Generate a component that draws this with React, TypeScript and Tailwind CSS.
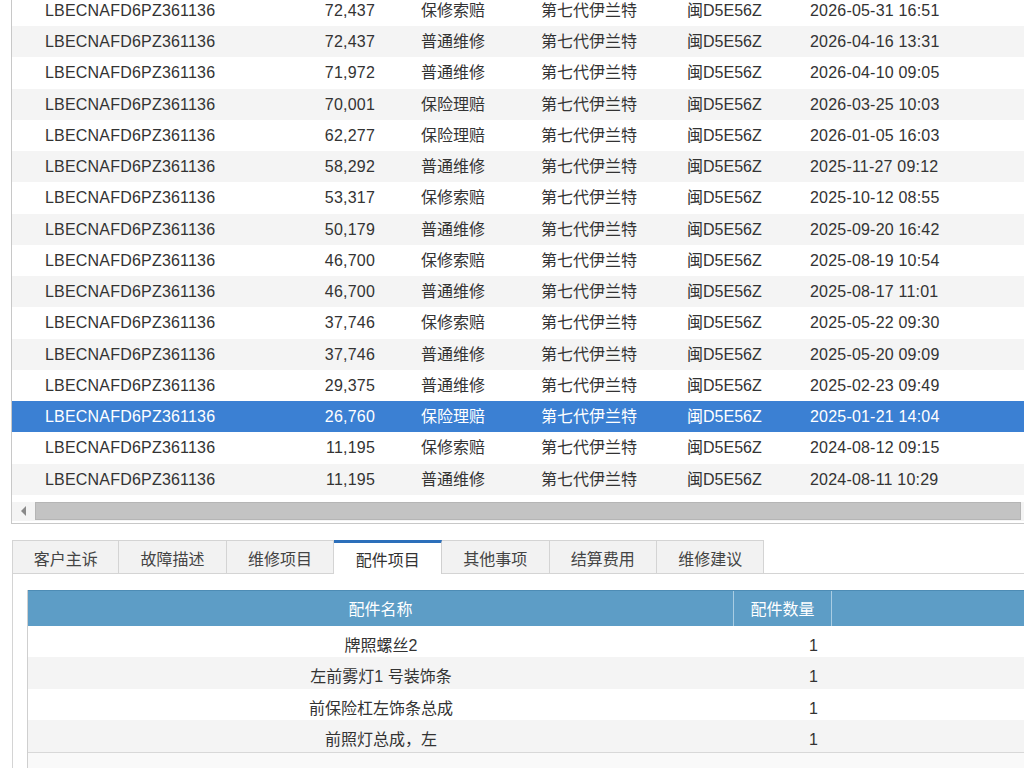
import React from "react";

type Record = {
  vin: string;
  mileage: string;
  kind: string;
  model: string;
  plate: string;
  time: string;
};

const VIN = "LBECNAFD6PZ361136";

const records: Record[] = [
  ["72,437", "保修索赔", "2026-05-31 16:51"],
  ["72,437", "普通维修", "2026-04-16 13:31"],
  ["71,972", "普通维修", "2026-04-10 09:05"],
  ["70,001", "保险理赔", "2026-03-25 10:03"],
  ["62,277", "保险理赔", "2026-01-05 16:03"],
  ["58,292", "普通维修", "2025-11-27 09:12"],
  ["53,317", "保修索赔", "2025-10-12 08:55"],
  ["50,179", "普通维修", "2025-09-20 16:42"],
  ["46,700", "保修索赔", "2025-08-19 10:54"],
  ["46,700", "普通维修", "2025-08-17 11:01"],
  ["37,746", "保修索赔", "2025-05-22 09:30"],
  ["37,746", "普通维修", "2025-05-20 09:09"],
  ["29,375", "普通维修", "2025-02-23 09:49"],
  ["26,760", "保险理赔", "2025-01-21 14:04"],
  ["11,195", "保修索赔", "2024-08-12 09:15"],
  ["11,195", "普通维修", "2024-08-11 10:29"],
].map(([mileage, kind, time]) => ({
  vin: VIN,
  mileage,
  kind,
  model: "第七代伊兰特",
  plate: "闽D5E56Z",
  time,
}));

const SELECTED = 13;

const tabs = ["客户主诉", "故障描述", "维修项目", "配件项目", "其他事项", "结算费用", "维修建议"];
const ACTIVE_TAB = 3;

const parts = [
  { name: "牌照螺丝2", qty: 1 },
  { name: "左前雾灯1 号装饰条", qty: 1 },
  { name: "前保险杠左饰条总成", qty: 1 },
  { name: "前照灯总成，左", qty: 1 },
];

function RecordRow({ r, index }: { r: Record; index: number }) {
  const selected = index === SELECTED;
  const bg = selected ? "bg-[#3b80d3] text-white" : index % 2 === 1 ? "bg-[#f4f4f4]" : "bg-white";
  return (
    <div className={`flex h-[31.25px] items-center pt-[1px] whitespace-nowrap ${bg}`}>
      <div className="w-[288px] pl-[33px] tracking-[0.2px]">{r.vin}</div>
      <div className="w-[75px] text-right tracking-[0.2px]">{r.mileage}</div>
      <div className="w-[166px] pl-[46px]">{r.kind}</div>
      <div className="w-[146px]">{r.model}</div>
      <div className="w-[123px]">{r.plate}</div>
      <div className="flex-1 tracking-[0.2px]">{r.time}</div>
    </div>
  );
}

export default function App() {
  return (
    <div
      className="w-[1024px] h-[768px] overflow-hidden bg-white text-[16px] leading-none text-[#333]"
      style={{ fontFamily: '"Liberation Sans", "Noto Sans CJK SC", sans-serif' }}
    >
      {/* Repair history grid, scrolled down */}
      <div className="ml-[11px] mt-[-5.25px] border-l border-b border-[#c8c8c8]">
        {records.map((r, i) => (
          <RecordRow key={i} r={r} index={i} />
        ))}
        <div className="h-[7px]" />
        {/* Horizontal scrollbar */}
        <div className="flex h-[19px] items-center bg-[#f4f4f4]">
          <div className="flex w-[23px] justify-center">
            <div className="h-0 w-0 border-y-[5px] border-r-[5px] border-y-transparent border-r-[#8a8a8a]" />
          </div>
          <div className="h-[18px] flex-1 border border-[#b5b5b5] bg-[#c3c3c3] mr-[3px]" />
        </div>
        <div className="h-[2px]" />
      </div>

      {/* Detail tabs */}
      <div className="mt-[16px] ml-[12px] flex">
        {tabs.map((t, i) =>
          i === ACTIVE_TAB ? (
            <div
              key={t}
              className="flex h-[34px] w-[108px] items-center justify-center border-t-[3px] border-r border-t-[#2c6fba] border-r-[#d0d0d0] bg-white pt-[5px] text-[#333]"
            >
              {t}
            </div>
          ) : (
            <div
              key={t}
              className="flex h-[34px] w-[107.4px] items-center justify-center border-y border-r border-[#d4d4d4] bg-[#f2f2f2] pt-[7px] text-[#444] first:border-l"
            >
              {t}
            </div>
          )
        )}
        <div className="flex-1 border-b border-[#d4d4d4]" />
      </div>

      {/* Parts list */}
      <div className="ml-[12px] h-[200px] border-l border-[#d4d4d4] pt-[16px] pl-[14px]">
        <div className="border-l border-[#cfcfcf]">
          <div className="flex h-[36px] items-center border-t border-[#4d8cb5] bg-[#5d9dc6] text-white">
            <div className="flex h-full w-[706px] items-center justify-center border-r border-[#a9cde3] pt-[3px]">配件名称</div>
            <div className="flex h-full w-[98px] items-center justify-center border-r border-[#a9cde3] pt-[3px]">配件数量</div>
            <div className="flex-1" />
          </div>
          {parts.map((p, i) => (
            <div
              key={i}
              className={`flex h-[31.5px] items-center pt-[8px] ${i % 2 === 1 ? "bg-[#f4f4f4]" : "bg-white"}`}
            >
              <div className="w-[706px] text-center">{p.name}</div>
              <div className="w-[98px] pr-[14px] text-right">{p.qty}</div>
              <div className="flex-1" />
            </div>
          ))}
          <div className="h-[30px] border-t border-[#d8d8d8] bg-[#f9f9f9]" />
        </div>
      </div>
    </div>
  );
}
